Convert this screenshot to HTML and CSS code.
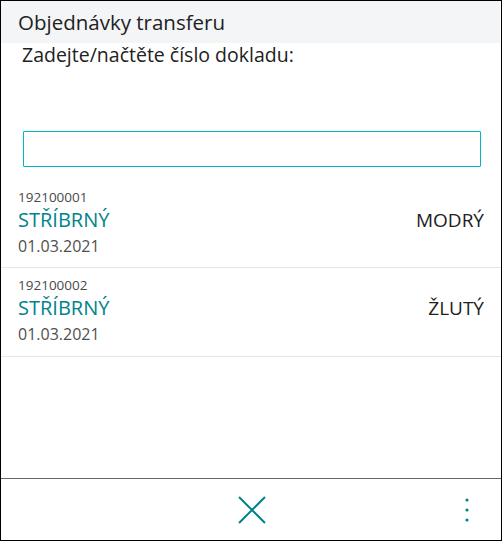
FILE: index.html
```html
<!DOCTYPE html>
<html lang="cs">
<head>
  <meta charset="UTF-8">
  <meta name="viewport" content="width=device-width, initial-scale=1.0">
  <title>Objednávky transferu</title>
  <link rel="stylesheet" href="styles.css">
</head>
<body>
  <div class="app">
    <div class="header">Objednávky transferu</div>

    <div class="prompt">Zadejte/načtěte číslo dokladu:</div>

    <div class="search">
      <input type="text" class="search-input">
    </div>

    <div class="list">
      <div class="row">
        <div class="row-main">
          <div class="doc-no">192100001</div>
          <div class="from">STŘÍBRNÝ</div>
          <div class="date">01.03.2021</div>
        </div>
        <div class="to">MODRÝ</div>
      </div>
      <div class="row">
        <div class="row-main">
          <div class="doc-no">192100002</div>
          <div class="from">STŘÍBRNÝ</div>
          <div class="date">01.03.2021</div>
        </div>
        <div class="to">ŽLUTÝ</div>
      </div>
    </div>

    <div class="footer">
      <button class="close-btn" title="Zavřít">
        <svg width="28" height="28" viewBox="0 0 28 28">
          <path d="M1 1 L27 27 M27 1 L1 27" stroke="#00838a" stroke-width="2" fill="none"/>
        </svg>
      </button>
      <button class="more-btn" title="Další">
        <svg width="6" height="26" viewBox="0 0 6 26">
          <circle cx="3" cy="3" r="1.6" fill="#00838a"/>
          <circle cx="3" cy="13" r="1.6" fill="#00838a"/>
          <circle cx="3" cy="23" r="1.6" fill="#00838a"/>
        </svg>
      </button>
    </div>
  </div>
</body>
</html>
```

FILE: styles.css
```css
* {
  box-sizing: border-box;
}

body {
  margin: 0;
  font-family: 'Open Sans', sans-serif;
  color: #212121;
  background: #fff;
}

.app {
  width: 502px;
  height: 541px;
  border: 1px solid #000;
  display: flex;
  flex-direction: column;
}

.header {
  height: 42px;
  line-height: 42px;
  padding-left: 17px;
  margin-right: 1px;
  background: #f4f5f7;
  font-size: 20.5px;
  color: #212121;
}

.prompt {
  padding: 0 21px;
  font-size: 19.5px;
  line-height: 24px;
  color: #212121;
}

.search {
  padding: 64px 20px 0 22px;
}

.search-input {
  display: block;
  width: 100%;
  height: 36px;
  border: 1.5px solid #00b7c3;
  border-radius: 1px;
  outline: none;
  font-family: inherit;
  font-size: 16px;
  padding: 0 8px;
}

.list {
  margin-top: 17px;
}

.row {
  display: flex;
  justify-content: space-between;
  align-items: flex-start;
  padding: 4px 17px 9px 17px;
  border-bottom: 1px solid #e6e6e6;
}

.row + .row {
  padding-top: 8px;
  padding-bottom: 10px;
}

.doc-no {
  font-size: 13.5px;
  line-height: 18px;
  color: #4a4a4a;
}

.from {
  font-size: 20px;
  line-height: 28px;
  color: #00838a;
}

.date {
  font-size: 16px;
  line-height: 24px;
  color: #505050;
}

.to {
  margin-top: 19px;
  font-size: 19px;
  line-height: 26px;
  color: #212121;
}

.footer {
  margin-top: auto;
  height: 62px;
  border-top: 1px solid #666;
  display: flex;
  align-items: center;
  justify-content: center;
  position: relative;
}

.close-btn,
.more-btn {
  border: none;
  background: none;
  padding: 0;
  cursor: pointer;
  display: flex;
}

.close-btn {
  margin-left: 2px;
}

.more-btn {
  position: absolute;
  right: 31px;
  top: 18px;
}
```
